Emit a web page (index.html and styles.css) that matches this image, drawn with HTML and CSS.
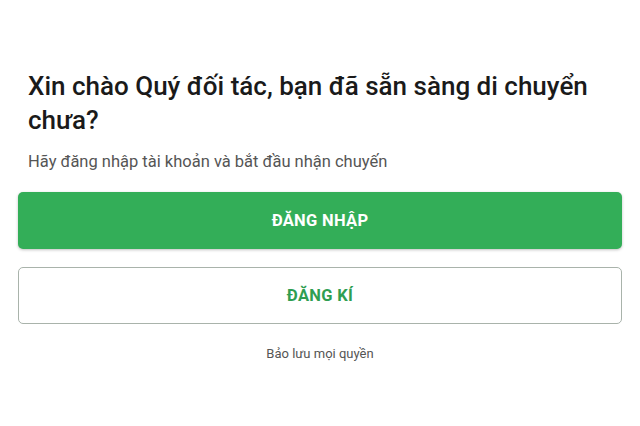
FILE: index.html
```html
<!DOCTYPE html>
<html lang="vi">
<head>
    <meta charset="UTF-8">
    <meta name="viewport" content="width=device-width, initial-scale=1.0">
    <title>Đăng nhập đối tác</title>
    <link rel="stylesheet" href="styles.css">
</head>
<body>

    <main class="welcome">
        <h1 class="welcome-title">Xin chào Quý đối tác, bạn đã sẵn sàng di chuyển chưa?</h1>
        <p class="welcome-sub">Hãy đăng nhập tài khoản và bắt đầu nhận chuyến</p>

        <div class="actions">
            <button class="btn btn-primary">ĐĂNG NHẬP</button>
            <button class="btn btn-outline">ĐĂNG KÍ</button>
        </div>

        <p class="copyright">Bảo lưu mọi quyền</p>
    </main>

</body>
</html>
```

FILE: styles.css
```css
body {
    margin: 0;
    background-color: #ffffff;
    font-family: Roboto, "Noto Sans", sans-serif;
    color: #1f1f1f;
}

.welcome {
    padding: 69px 18px 0 18px;
}

.welcome-title {
    margin: 0 0 0 10px;
    font-size: 26px;
    font-weight: 500;
    line-height: 34px;
    color: #1a1a1a;
}

.welcome-sub {
    margin: 15px 0 0 10px;
    font-size: 16.5px;
    color: #555555;
}

/* Buttons */
.actions {
    display: flex;
    flex-direction: column;
    gap: 18px;
    margin-top: 21px;
}

.btn {
    display: block;
    width: 100%;
    height: 57px;
    font-family: inherit;
    font-size: 16.5px;
    font-weight: 700;
    letter-spacing: 0.3px;
    border-radius: 5px;
    cursor: pointer;
}

.btn-primary {
    background-color: #33ae58;
    color: #ffffff;
    border: none;
    box-shadow: 0 1px 3px rgba(0, 0, 0, 0.25);
}

.btn-outline {
    background-color: #ffffff;
    color: #2f9e52;
    border: 1px solid #a9b3ab;
}

.copyright {
    margin: 22px 0 0 0;
    text-align: center;
    font-size: 13px;
    color: #555555;
}
```
